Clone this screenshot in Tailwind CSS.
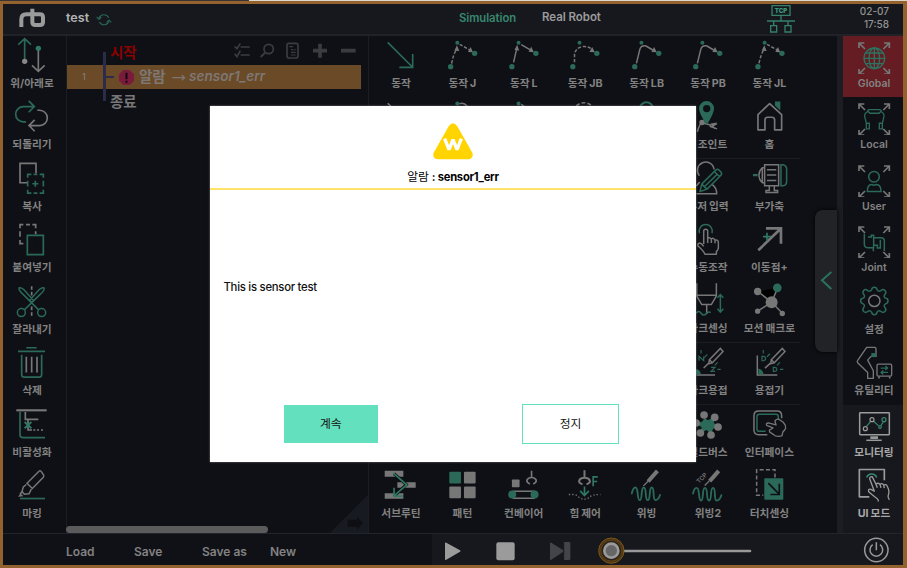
<!DOCTYPE html>
<html lang="ko">
<head>
<meta charset="utf-8">
<title>test</title>
<script src="https://cdn.jsdelivr.net/npm/@tailwindcss/browser@4"></script>
</head>
<body class="w-[907px] h-[568px] overflow-hidden bg-[#0f1015] font-['Inter','Noto_Sans_CJK_KR',sans-serif] text-[#828282]">
<svg class="absolute w-0 h-0" aria-hidden="true">
  <symbol id="corners" overflow="visible"><g fill="none" stroke="#777" stroke-width="5"><path d="M48 36V21H64M48 21L66 39M123 21H139V36M139 21L121 39M48 99V114H64M48 114L66 96M139 99V114H123M139 114L121 96"/></g></symbol>
</svg>
<div class="relative w-[907px] h-[568px] flex flex-col">
  <div class="h-px shrink-0 flex"><div class="w-[249px] bg-[#3a3434]"></div><div class="flex-1 bg-[#dcd6cb]"></div></div>
  <div class="flex-1 min-h-0 flex flex-col border-[3px] border-r-4 border-[#93622f]">

    <!-- header -->
    <header class="h-8 shrink-0 bg-[#17181d] border-b-2 border-[#202228] flex items-center font-semibold relative">
      <svg class="ml-[15px] w-[29px] h-[22px] shrink-0 mt-[-3px]" viewBox="54 21 87 66" fill="none" stroke="#9b9b9b" stroke-width="12"><path d="M64 81V58Q64 43 79 43H90M97 26V66Q97 75 106 75H120Q129 75 129 66V52Q129 43 120 43H88"/></svg>
      <div class="ml-[19px] text-[12.600px] text-[#b4b4b4] w-[26px] mt-[-1px]">test</div>
      <svg class="ml-[3px] w-[18px] h-[18px] mt-px" viewBox="285 27 54 54" fill="none" stroke="#276353" stroke-width="3.500"><path d="M297 48A16 16 0 0 1 326 47M327 58A16 16 0 0 1 298 60M290 45L297 52L304 45M320 61L327 54L334 61"/></svg>
      <div class="ml-[346px] w-[58px] text-[#388770] text-[11.300px] tracking-[-0.050px] whitespace-nowrap mt-[-2px]">Simulation</div>
      <div class="ml-[25px] w-[60px] text-[#9b9b9b] text-[11.500px] tracking-[-0.050px] whitespace-nowrap mt-[-2px]">Real Robot</div>
      <svg class="ml-[164px] w-[30px] h-[30px] shrink-0" viewBox="410 9 90 90"><g fill="none" stroke="#348069" stroke-width="4"><path d="M428 14H482V43H428ZM455 43V59M413 60H497M433 60V73M476 60V73M424 74H442V93H424ZM467 74H485V93H467Z"/></g><text x="455" y="35" text-anchor="middle" font-size="18" font-weight="900" fill="#3e9a7e">TCP</text></svg>
      <div class="ml-auto mr-[14px] text-right text-[10px] font-medium leading-[13.500px] text-[#929292] mt-[-2px]">02-07<br>17:58</div>
    </header>

    <div class="flex-1 min-h-0 flex">
      <!-- left tools -->
      <nav class="w-[64px] shrink-0 border-r border-[#1b1d22] text-[10.700px] font-bold text-center *:w-[58px] *:h-[61.450px]">
        <div><svg class="w-[58px] h-[38px]" viewBox="9 108 174 114" fill="none" stroke-width="5"><g stroke="#2b6a58"><path d="M74 184V118M55 134L74 116L93 134"/></g><g stroke="#777"><path d="M115 145V212M96 196L115 214L134 196"/></g><circle cx="74" cy="184" r="8" fill="#888"/><circle cx="115" cy="145" r="8" fill="#2f7864"/></svg><p class="leading-5">위/아래로</p></div>
        <div><svg class="w-[58px] h-[38px]" viewBox="9 292.350 174 114" fill="none" stroke-width="5"><path stroke="#2b6a58" d="M78 367H70A23 23 0 0 1 70 321H101M86 304L103 321L86 338"/><path stroke="#777" d="M112 332H119A23 23 0 0 1 119 378H88M104 361L87 378L104 395"/></svg><p class="leading-5">되돌리기</p></div>
        <div><svg class="w-[58px] h-[38px]" viewBox="9 26.700 174 114" fill="none" stroke-width="5"><path stroke="#777" d="M82 98H60V40H108V70"/><path stroke="#2b6a58" d="M83 83V73H94M101 73H112M119 73H130V83M130 92V109M130 119V129H119M112 129H101M94 129H83V119M83 109V92M97 101H115M106 92V110"/></svg><p class="leading-5">복사</p></div>
        <div><svg class="w-[58px] h-[38px]" viewBox="9 211.050 174 114" fill="none" stroke-width="5"><path stroke="#777" d="M60 236V225H70M78 225H90M97 225H107V236M107 245V254M60 245V261M60 271V282H70"/><path stroke="#2b6a58" d="M82 257H130V315H82Z"/></svg><p class="leading-5">붙여넣기</p></div>
        <div><svg class="w-[58px] h-[38px]" viewBox="9 395.400 174 114" fill="none" stroke-width="4.500"><path stroke="#777" stroke-width="5" d="M95 408V419M95 425V436M95 469V480M95 486V497"/><g stroke="#2b6a58"><path d="M73 479L119 434Q135 420 132 413Q125 410 113 423L89 450M116 479L71 434Q55 420 57 413Q64 410 76 423L100 450M89 450L95 457L100 450"/><circle cx="64" cy="487" r="12"/><circle cx="125" cy="487" r="12"/></g></svg><p class="leading-5">잘라내기</p></div>
        <div><svg class="w-[58px] h-[38px]" viewBox="9 24.750 174 114" fill="none" stroke-width="5"><path stroke="#2b6a58" d="M79 39H110M54 50H135M65 60V119Q65 127 73 127H117Q125 127 125 119V60"/><path stroke="#777" d="M79 66V113M95 66V113M111 66V113"/></svg><p class="leading-5">삭제</p></div>
        <div><svg class="w-[58px] h-[38px]" viewBox="9 209.100 174 114" fill="none" stroke-width="5"><path stroke="#2b6a58" d="M60 229V298Q60 307 69 307H135"/><path stroke="#777" stroke-width="6.500" d="M49 225H140"/><path stroke="#777" d="M76 230V252H115M84 254V284H96M100 284H106M111 284H117M123 284H129"/><path stroke="#2f7864" stroke-width="6" d="M74 260L94 279M94 260L74 279"/></svg><p class="leading-5">비활성화</p></div>
        <div><svg class="w-[58px] h-[38px]" viewBox="9 393.450 174 114" fill="none" stroke="#777" stroke-width="4.500"><path d="M81 445L117 409Q120 406 123 409L131 421Q132 424 130 427L97 461ZM79 449L70 456L66 470L73 478L87 477L94 463M66 470L60 479"/><path fill="#777" stroke="none" d="M54 486L62 476L70 484Z"/><path stroke="#2b6a58" stroke-width="5" d="M60 491H135"/></svg><p class="leading-5">마킹</p></div>
      </nav>

      <!-- program tree -->
      <section class="w-[302px] shrink-0 relative border-r border-[#1b1d22]">
        <div class="h-[29px] flex items-center">
          <span class="ml-[43px] w-[30px] text-[14.500px] leading-none text-[#8c0000] font-bold whitespace-nowrap mt-[5px]">시작</span>
          <svg class="ml-[92px] w-[130px] h-[22px]" viewBox="696 120 390 66" fill="none" stroke="#3b3c3f" stroke-width="5"><path d="M704 139L711 146L721 130M722 141H749M704 161L711 170L721 152M722 165H749" stroke-width="5"/><circle cx="806" cy="147" r="14"/><path stroke-width="6" d="M796 157L782 171"/><rect x="861" y="130" width="33" height="44" rx="6"/><path stroke-width="3.500" d="M868 140H879M883 149H887M873 149H880M873 157H887M873 165H887"/><path stroke-width="11" d="M939 152H981M960 131V173M1023 152H1067"/></svg>
        </div>
        <div class="h-6 w-[294px] bg-[#6b4a28] flex items-center whitespace-nowrap">
          <span class="w-[34px] text-center text-[9.500px]">1</span>
          <svg class="ml-[17px] w-[17px] h-[17px]" viewBox="0 0 51 51"><path fill="#7a1b3c" d="M16 3H35L48 16V35L35 48H16L3 35V16Z"/><path stroke="#100810" stroke-width="6" d="M25.500 11V31M25.500 35V41"/></svg>
          <span class="ml-[4px] w-[28px] text-[14.500px] leading-none font-bold text-[#7d7873] mt-px">알람</span>
          <svg class="ml-[5px] w-[14px] h-3" viewBox="0 0 42 36" fill="none" stroke="#7d7774" stroke-width="3.500"><path d="M1 20H38M29 12L38 20L29 28"/></svg>
          <span class="ml-[3px] text-[13.600px] leading-none font-semibold italic text-[#7d7873]">sensor1_err</span>
        </div>
        <div class="h-6 flex items-center"><span class="ml-[43px] text-[14.500px] leading-none font-bold text-[#777] mt-[2px]">종료</span></div>
        <div class="absolute left-[36px] top-[16px] w-[3px] h-[49px] bg-[#2a2c48]"></div>
        <div class="absolute left-[39px] top-[40px] w-[8px] h-[2px] bg-[#2a2c48]"></div>
        <div class="absolute left-[-1px] bottom-0 w-[202px] h-[7.500px] rounded-full bg-[#5b5b5b]"></div>
        <svg class="absolute right-0 bottom-0 w-[38px] h-[38px]" viewBox="424 76 114 114"><path fill="#181a21" d="M424 190L538 76V190Z"/><path fill="#0e0f13" d="M477 150H505V141L523 160L505 180V171H477Z"/></svg>
      </section>

      <!-- commands -->
      <section class="flex-1 min-w-0 relative pl-[1.300px] text-[10.700px] font-bold text-center [word-spacing:-0.500px]">
        <div class="grid grid-cols-7 w-[429.800px] h-[122.900px] grid-rows-2 border-b border-[#1b1d22] whitespace-nowrap">
          <div><svg class="w-full h-[38px]" viewBox=".9 108 184.200 114" fill="none" stroke="#2b6a58" stroke-width="5"><path d="M54 127L128 201M89 202H129V162"/></svg><p class="leading-5">동작</p></div>
          <div><svg class="w-full h-[38px]" viewBox="185.100 108 184.200 114" fill="none" stroke="#777" stroke-width="4.500"><path stroke-dasharray="10 5" d="M244 191Q249 163 258 150M268 133L299 150"/><path fill="#777" stroke="none" d="M252 152L260 136L267 153ZM293 156L301 141L308 157Z"/><g fill="#2b6a58" stroke="none"><circle cx="241" cy="200" r="8"/><circle cx="261" cy="128" r="6"/><circle cx="313" cy="160" r="8"/></g></svg><p class="leading-5">동작 J</p></div>
          <div><svg class="w-full h-[38px]" viewBox="369.300 108 184.200 114" fill="none" stroke="#777" stroke-width="4.500"><path d="M431 187L440 148M454 134L480 149"/><path fill="#777" stroke="none" d="M434 149L442 134L448 152ZM476 155L484 140L492 157Z"/><g fill="#2b6a58" stroke="none"><circle cx="426" cy="200" r="8"/><circle cx="446" cy="128" r="6"/><circle cx="498" cy="160" r="8"/></g></svg><p class="leading-5">동작 L</p></div>
          <div><svg class="w-full h-[38px]" viewBox="553.500 108 184.200 114" fill="none" stroke="#777" stroke-width="4.500"><path stroke-dasharray="10 5" d="M615 187Q615 175 615 163Q618 144 638 140Q654 138 665 146"/><path fill="#777" stroke="none" d="M660 156L668 141L676 157Z"/><g fill="#2b6a58" stroke="none"><circle cx="610" cy="200" r="8"/><circle cx="630" cy="128" r="6"/><circle cx="682" cy="160" r="8"/></g></svg><p class="leading-5">동작 JB</p></div>
          <div><svg class="w-full h-[38px]" viewBox="-42.300 108 184.200 114" fill="none" stroke="#777" stroke-width="4.500"><path d="M19 190L29 149Q33 135 48 138L68 150"/><path fill="#777" stroke="none" d="M64 156L72 141L80 157Z"/><g fill="#2b6a58" stroke="none"><circle cx="14" cy="200" r="8"/><circle cx="34" cy="128" r="6"/><circle cx="86" cy="160" r="8"/></g></svg><p class="leading-5">동작 LB</p></div>
          <div><svg class="w-full h-[38px]" viewBox="141.900 108 184.200 114" fill="none" stroke="#777" stroke-width="4.500"><path d="M203 190L213 149Q217 135 232 138L252 150"/><path fill="#777" stroke="none" d="M248 156L256 141L264 157Z"/><g fill="#2b6a58" stroke="none"><circle cx="198" cy="200" r="8"/><circle cx="218" cy="128" r="6"/><circle cx="270" cy="160" r="8"/></g></svg><p class="leading-5">동작 PB</p></div>
          <div><svg class="w-full h-[38px]" viewBox="326.100 108 184.200 114" fill="none" stroke="#777" stroke-width="4.500"><path stroke-dasharray="10 5" d="M386 190Q392 163 400 150M410 133L441 150"/><path fill="#777" stroke="none" d="M394 152L402 136L409 153ZM435 156L443 141L450 157Z"/><g fill="#2b6a58" stroke="none"><circle cx="383" cy="200" r="8"/><circle cx="403" cy="128" r="6"/><circle cx="455" cy="160" r="8"/></g></svg><p class="leading-5">동작 JL</p></div>
          <div><svg class="w-full h-[38px]" viewBox=".9 292.350 184.200 114" stroke="#777" stroke-width="5"><path d="M54 311L66 323"/></svg></div>
          <div><svg class="w-full h-[38px]" viewBox="185.100 292.350 184.200 114" fill="none" stroke="#777" stroke-width="4.500"><path d="M267 313Q280 307 291 320"/><circle cx="261" cy="312" r="6" fill="#2b6a58" stroke="none"/></svg></div>
          <div><svg class="w-full h-[38px]" viewBox="369.300 292.350 184.200 114" stroke="#777" stroke-width="4.500"><path d="M454 314L464 322"/><circle cx="446" cy="312" r="6" fill="#2b6a58" stroke="none"/></svg></div>
          <div><svg class="w-full h-[38px]" viewBox="553.500 292.350 184.200 114" fill="none" stroke="#777" stroke-width="4.500"><path stroke-dasharray="12 6" d="M620 319Q643 300 668 319"/></svg></div>
          <div><svg class="w-full h-[38px]" viewBox="-42.300 292.350 184.200 114" fill="none" stroke="#2b6a58" stroke-width="6"><circle cx="49" cy="328" r="20"/></svg></div>
          <div><svg class="w-full h-[38px]" viewBox="141.900 292.350 184.200 114" fill="none" stroke="#777" stroke-width="4.500"><path d="M203 397Q210 370 217 370M222 371L245 377M240 380L262 388M262 372L246 380"/><circle cx="217" cy="369" r="6" fill="#777"/><path fill="#777" stroke="none" d="M242 372L262 369L252 380L256 390Z"/><path fill="#2b6a58" fill-rule="evenodd" stroke="none" d="M231 376Q208 342 208 327A22 22 0 0 1 253 327Q253 342 231 376ZM231 316A11 11 0 1 0 231 338A11 11 0 1 0 231 316Z"/></svg><p class="leading-5 pl-[9px]">조인트</p></div>
          <div><svg class="w-full h-[38px]" viewBox="326.100 292.350 184.200 114" fill="none" stroke="#777" stroke-width="5"><path stroke-linejoin="round" d="M383 391V345L418 312L454 345V391H433V361Q433 353 425 353H412Q404 353 404 361V391Z"/><path fill="#2b6a58" stroke="none" d="M434 306H450V333L434 318Z"/></svg><p class="leading-5">홈</p></div>
        </div>
        <div class="grid grid-cols-7 w-[429.800px] h-[184.350px] grid-rows-3 border-b border-[#1b1d22] whitespace-nowrap">
          <div class="col-start-6"><svg class="w-full h-[38px]" viewBox="-38.100 26.700 184.200 114" fill="none" stroke="#777" stroke-width="4.500"><path d="M73 58A25 25 0 1 0 29 77M20 108L30 96M20 131H81Q81 113 67 103"/><path fill="#0f1015" stroke="#2b6a58" stroke-linejoin="round" d="M31 124L36 102L78 60Q83 55 88 60L94 66Q98 71 93 76L52 117ZM74 64L90 80M36 102L52 117M44 110L83 72"/></svg><p class="leading-5">유저 입력</p></div>
          <div><svg class="w-full h-[38px]" viewBox="146.100 26.700 184.200 114" fill="none" stroke="#777" stroke-width="4.500"><path d="M223 44H265V107H223ZM223 53H216Q206 62 206 75Q206 89 216 98H223M216 53V98M230 59H258M230 75H258M230 91H258M237 107V121H227V127H262V121H252V107"/><path stroke="#2b6a58" d="M272 44H278Q289 47 289 57V94Q289 105 278 107H272Z"/><path stroke="#2b6a58" stroke-width="7" d="M188 75H202"/></svg><p class="leading-5">부가축</p></div>
          <div class="col-start-6"><svg class="w-full h-[38px]" viewBox="-38.100 211.050 184.200 114" fill="none" stroke="#777" stroke-width="4.500" stroke-linejoin="round"><path d="M42 283V245Q42 239 48 239Q54 239 54 245V267Q58 261 65 268Q71 263 76 271Q87 269 86 281V296Q84 302 80 306V314H46Q43 305 25 289Q23 281 30 280Q36 281 42 290M54 265V280M65 268V280M76 271V281"/><path stroke="#2b6a58" d="M29 251A20 20 0 1 1 67 251"/></svg><p class="leading-5">수동조작</p></div>
          <div><svg class="w-full h-[38px]" viewBox="146.100 211.050 184.200 114" fill="none" stroke="#777" stroke-width="8"><path d="M204 302L270 238M227 236H272V282"/><path stroke="#2f7864" stroke-width="5" d="M218 261H242M230 249V273"/></svg><p class="leading-5">이동점+</p></div>
          <div class="col-start-6"><svg class="w-full h-[38px]" viewBox="-38.100 395.400 184.200 114" fill="none" stroke="#777" stroke-width="4.500"><path d="M21 402V438H80V402M21 440L36 466H65L80 440M51 466V494" /><path stroke="#2b6a58" d="M92 438V487M83 446L92 436L101 446M83 479L92 489L101 479M20 492Q27 482 34 492T49 494T63 490"/></svg><p class="leading-5">아크센싱</p></div>
          <div><svg class="w-full h-[38px]" viewBox="146.100 395.400 184.200 114" stroke="#777" stroke-width="4.500"><path d="M203 427L244 459L262 416M244 459L202 486M244 459L277 493"/><g fill="#777" stroke="none"><circle cx="202" cy="427" r="11"/><circle cx="244" cy="459" r="18"/><circle cx="202" cy="486" r="8"/><circle cx="276" cy="493" r="8"/></g><circle cx="261" cy="416" r="13" fill="#2b6a58" stroke="none"/></svg><p class="leading-5">모션 매크로</p></div>
        </div>
        <div class="grid grid-cols-7 w-[429.800px] h-[61.450px] border-b border-[#1b1d22] whitespace-nowrap">
          <div class="col-start-6"><svg class="w-full h-[38px]" viewBox="-38.100 24.750 184.200 114" fill="none" stroke="#777" stroke-width="4.500"><path d="M20 121H76M42 100L58 84M59 75L92 41L100 50L68 84ZM59 75L57 87L68 84"/><path fill="#2b6a58" stroke="none" d="M18 119V103Q31 104 34 119Z"/><g stroke="#2b6a58" stroke-width="3.500"><path d="M34 46V56M83 104H93M28 78V65L42 78V65M64 98H76L64 110H76M44 68L53 59M75 92L84 83"/></g></svg><p class="leading-5">아크용접</p></div>
          <div><svg class="w-full h-[38px]" viewBox="146.100 24.750 184.200 114" fill="none" stroke="#777" stroke-width="4.500"><path d="M201 62V121H261M224 100L243 83M243 75L276 41L284 50L252 84ZM243 75L241 87L252 84"/><path fill="#2b6a58" stroke="none" d="M204 119V101Q218 104 220 119Z"/><g stroke="#2b6a58" stroke-width="3.500"><path d="M219 46V56M269 104H279M215 65V78H219Q226 77 226 71.500T219 65ZM249 98V110H253Q260 109 260 104T253 98ZM230 66L239 57M260 92L269 83"/></g></svg><p class="leading-5">용접기</p></div>
        </div>
        <div class="grid grid-cols-7 w-[429.800px] h-[122.900px] grid-rows-2 whitespace-nowrap">
          <div class="col-start-6"><svg class="w-full h-[38px]" viewBox="-38.100 209.100 184.200 114" fill="#777"><path fill="#2b6a58" d="M45 248L55 255L76 243L72 263L86 272L70 280L64 296L51 284L32 293L36 276L18 264L37 259Z"/><circle cx="43" cy="239" r="11.500"/><circle cx="75" cy="246" r="11.500"/><circle cx="85" cy="275" r="11.500"/><circle cx="64" cy="299" r="11.500"/><circle cx="32" cy="293" r="11.500"/><circle cx="19" cy="263" r="11.500"/></svg><p class="leading-5">필드버스</p></div>
          <div><svg class="w-full h-[38px]" viewBox="146.100 209.100 184.200 114" fill="none" stroke="#777" stroke-width="4.500" stroke-linejoin="round"><path d="M231 298H205Q191 298 191 284V241Q191 227 205 227H260Q274 227 274 241V249"/><path stroke="#2b6a58" d="M226 288H207Q200 288 200 281V244Q200 237 207 237H257Q264 237 264 244V256"/><path fill="#0f1015" stroke-width="4" d="M248 278L229 270Q226 263 234 263L257 269L254 257Q261 247 270 255L279 261Q287 270 286 279Q283 286 278 289L275 302Q257 306 250 298L238 290Q236 282 242 282Z"/></svg><p class="leading-5">인터페이스</p></div>
          <div class="col-start-1"><svg class="w-full h-[38px]" viewBox=".9 33.450 184.200 114"><g fill="#777"><path d="M45 48H101V66H45ZM83 82H138V99H83ZM45 115H101V132H45Z"/></g><path fill="none" stroke="#0f1015" stroke-width="9" d="M73 56L110 89L73 124"/><path fill="none" stroke="#2f7864" stroke-width="5" d="M71 55L111 90L72 124M73 99V124H99"/></svg><p class="leading-5">서브루틴</p></div>
          <div><svg class="w-full h-[38px]" viewBox="185.100 33.450 184.200 114" fill="#777"><rect x="237" y="51" width="35" height="35" rx="3" fill="#2b6a58"/><rect x="281" y="51" width="35" height="35" rx="3"/><rect x="237" y="95" width="35" height="35" rx="3"/><rect x="281" y="95" width="35" height="35" rx="3"/></svg><p class="leading-5">패턴</p></div>
          <div><svg class="w-full h-[38px]" viewBox="369.300 33.450 184.200 114" fill="none" stroke="#777" stroke-width="4.500"><rect x="426" y="74" width="23" height="23" rx="2" fill="#777" stroke="none"/><path stroke-width="5" d="M485 48V66M480 87Q470 84 471 76Q475 68 485 68T499 76Q500 84 490 87"/><path d="M428 109H495M428 130H495"/><g fill="#2b6a58" stroke="none"><circle cx="427" cy="119" r="12"/><circle cx="494" cy="119" r="12"/></g></svg><p class="leading-5">컨베이어</p></div>
          <div><svg class="w-full h-[38px]" viewBox="553.500 33.450 184.200 114" fill="none" stroke="#777" stroke-width="6"><path d="M645 46V68M639 88Q627 85 629 77Q633 69 645 69T661 77Q663 85 651 88"/><path stroke-dasharray="4 6" d="M598 119H614Q624 121 629 128Q645 138 659 128Q667 119 693 119" stroke-width="4"/><path stroke="#2f7864" stroke-width="5" d="M645 95V121M632 108L645 122L658 108M671 94V66H685M671 80H683"/></svg><p class="leading-5">힘 제어</p></div>
          <div><svg class="w-full h-[38px]" viewBox="737.700 33.450 184.200 114" fill="none" stroke="#777"><path stroke-width="12" d="M834 80L862 48"/><path stroke-width="4" d="M820 93L834 79"/><path stroke="#2b6a58" stroke-width="5.500" stroke-linecap="round" d="M785 116Q789 98 796 98C806 98 800 136 809 136S811 98 821 98S823 136 833 136S835 98 845 98S846 136 856 136Q865 136 870 120"/></svg><p class="leading-5">위빙</p></div>
          <div><svg class="w-full h-[38px]" viewBox="-38.100 393.450 184.200 114" fill="none" stroke="#777"><path stroke-width="12" d="M60 439L87 408"/><path stroke-width="4" d="M45 452L59 438"/><text transform="translate(28 447) rotate(-46)" fill="#777" stroke="none" font-size="18" font-weight="600">TCP</text><path stroke="#2b6a58" stroke-width="5.500" stroke-linecap="round" d="M10 476Q14 458 21 459C31 459 25 497 34 497S36 459 46 459S48 497 58 497S60 459 70 459S71 497 81 497Q90 497 95 481"/></svg><p class="leading-5">위빙2</p></div>
          <div><svg class="w-full h-[38px]" viewBox="146.100 393.450 184.200 114" fill="none" stroke="#777" stroke-width="4.500"><path stroke-dasharray="12 7" d="M254 428V405H199V481H219"/><rect x="222" y="430" width="57" height="65" rx="3" fill="#2b6a58" stroke="none"/><path stroke="#0f1015" stroke-width="5" d="M234 445L266 477M240 479H267V447"/></svg><p class="leading-5">터치센싱</p></div>
        </div>
        <div class="absolute right-0 top-[173.500px] w-[22px] h-[142.500px] rounded-l-[8px] bg-[#222327] shadow-[0_0_4px_#000] flex items-center"><svg class="ml-[4px] w-4 h-[21px]" viewBox="387 361 48 63" fill="none" stroke="#2a715e" stroke-width="6"><path d="M424 367L396 392L424 418"/></svg></div>
      </section>
      <div class="w-[6px] shrink-0 bg-[#1b1d22]"></div>

      <!-- view and settings -->
      <aside class="w-[60px] shrink-0 text-[10.700px] font-bold text-center *:h-[61.450px] flex flex-col whitespace-nowrap [word-spacing:-0.500px]">
        <div class="bg-[#651c22]"><svg class="w-[60px] h-[38px]" viewBox="639 108 180 114" fill="none" stroke="#2b7360" stroke-width="4"><use href="#corners" x="639" y="108"/><circle cx="733" cy="175" r="31"/><ellipse cx="733" cy="175" rx="16" ry="31"/><path d="M733 144V206M702 175H764M707 159H759M707 191H759"/></svg><p class="leading-5 text-[10.500px] font-semibold pl-[2px]">Global</p></div>
        <div><svg class="w-[60px] h-[38px]" viewBox="639 292.350 180 114" fill="none" stroke="#2b6a58" stroke-width="4"><use href="#corners" x="639" y="292.350"/><path d="M716 330H750L754 334L747 341H720L713 334ZM714 335Q703 341 704 350L706 359L709 371V388H718V371H711M752 335Q763 341 762 350L760 359L757 371V388H748V371H755M709 388V379"/></svg><p class="leading-5 text-[10.500px] font-semibold pl-[2px]">Local</p></div>
        <div><svg class="w-[60px] h-[38px]" viewBox="459 26.700 180 114" fill="none" stroke="#2b6a58" stroke-width="4.500"><use href="#corners" x="459" y="26.700"/><circle cx="552" cy="80" r="16"/><path d="M532 124Q532 103 545 103Q552 108 559 103Q573 103 573 124Z"/></svg><p class="leading-5 text-[10.500px] font-semibold pl-[2px]">User</p></div>
        <div><svg class="w-[60px] h-[38px]" viewBox="459 211.050 180 114" fill="none" stroke="#2b6a58" stroke-width="4.500"><use href="#corners" x="459" y="211.050"/><path d="M523 252V284Q523 294 533 294H550V305M534 262H544V257H551V294M551 264H573Q583 264 583 274V304M551 287H562V295H571V270"/></svg><p class="leading-5 text-[10.500px] font-semibold pl-[2px]">Joint</p></div>
        <div><svg class="w-[60px] h-[38px]" viewBox="459 395.400 180 114" fill="none" stroke="#2b6a58" stroke-width="4.500" stroke-linejoin="round"><path d="M545 418Q546 411 553 411T561 418Q566 426 573 421Q579 415 585 421Q590 427 585 432Q579 440 587 444Q594 444 594 452T587 461Q579 465 585 472Q590 478 585 484Q579 489 573 484Q566 479 561 486Q560 494 553 494T545 486Q540 479 533 484Q527 489 521 484Q516 478 521 472Q527 465 519 461Q512 460 512 452T519 444Q527 440 521 432Q516 427 521 421Q527 415 533 421Q540 426 545 418Z"/><circle cx="553" cy="452" r="17" stroke="#777"/></svg><p class="leading-5 pl-[2px]">설정</p></div>
        <div><svg class="w-[60px] h-[38px]" viewBox="459 24.750 180 114" fill="none" stroke="#777" stroke-width="4" stroke-linejoin="round"><path d="M530 38H555Q559 39 558 44V65H543L533 76L550 108V131H533V113L503 84Q500 80 503 77Z"/><path fill="#2b6a58" stroke="none" d="M544 55H557V67H544Z"/><rect x="561" y="88" width="44" height="36" rx="4"/><path d="M567 125V131M599 125V131" stroke-width="5"/><path stroke="#2b6a58" d="M572 100H592M586 94L593 100L586 106M594 113H574M580 107L573 113L580 119" stroke-width="4"/></svg><p class="leading-5 pl-[2px]">유틸리티</p></div>
        <div class="bg-[#17181d] text-[#a8a8a8]"><svg class="w-[60px] h-[38px]" viewBox="459 209.100 180 114" fill="none" stroke="#9b9b9b" stroke-width="4.500"><rect x="509" y="232" width="89" height="66" rx="2"/><path stroke-width="8" d="M541 307H564"/><path d="M529 315H575"/><g stroke-width="3.500"><path stroke="#388770" d="M529 274L542 258M550 257L565 271M573 270L580 260"/><circle cx="526" cy="280" r="6"/><circle cx="546" cy="253" r="6"/><circle cx="570" cy="275" r="4" stroke="#388770"/><circle cx="582" cy="253" r="6" stroke="#388770"/></g></svg><p class="leading-5 pl-[2px]">모니터링</p></div>
        <div class="bg-[#17181d] text-[#a8a8a8] grow"><svg class="w-[60px] h-[38px]" viewBox="459 393.450 180 114" fill="none" stroke="#9b9b9b" stroke-width="5" stroke-linejoin="round"><path d="M583 436V404H508V486H538"/><path stroke="#388770" d="M530 428A16 16 0 0 1 560 428"/><path stroke-width="4" fill="#17181d" d="M565 500Q566 493 553 485L536 471Q534 462 541 463L553 469L539 432Q539 424 547 426L558 448Q565 442 570 449Q576 443 581 451Q588 446 592 455Q600 471 595 480Q592 487 598 495M558 448L562 459M570 449L573 459M581 451L583 460"/></svg><p class="leading-5 pl-[2px]">UI 모드</p></div>
      </aside>
    </div>

    <!-- footer -->
    <footer class="h-[32px] shrink-0 bg-[#17181d] border-t border-[#22252e] flex items-center text-[12px] font-semibold relative">
      <div class="w-[429px] h-full bg-[#101116] flex items-center whitespace-nowrap pt-[5px]">
        <span class="ml-[63px] w-[68px]">Load</span><span class="w-[68px]">Save</span><span class="w-[68px]">Save as</span><span>New</span>
      </div>
      <svg class="w-[330px] h-[31px] shrink-0" viewBox="186 237 990 93"><path fill="#9b9b9b" d="M225 264Q225 261 229 263L270 286Q274 288 270 290L229 314Q225 316 225 312Z"/><rect x="379" y="262" width="55" height="54" rx="6" fill="#9b9b9b"/><path fill="#434448" d="M540 264Q540 261 544 263L580 286V264Q580 261 583 261H597Q601 261 601 265V311Q601 315 597 315H583Q580 315 580 312V290L544 314Q540 316 540 312Z"/><path stroke="#17181d" stroke-width="3" d="M581 262V315"/><path stroke="#999" stroke-width="8" stroke-linecap="round" d="M730 288H1140"/><circle cx="724" cy="287" r="38" fill="#4e3715" stroke="#7d5718" stroke-width="3"/><circle cx="724" cy="287" r="31" fill="#2a2119" stroke="#694a18" stroke-width="2"/><circle cx="724" cy="287" r="21" fill="#666" stroke="#9b9b9b" stroke-width="8"/></svg>
      <svg class="ml-auto mr-[13px] w-[28px] h-[28px]" viewBox="516 606 84 84" fill="none" stroke="#999" stroke-width="4.500"><circle cx="559" cy="648" r="35"/><path d="M559 625V649M548 632A19 19 0 1 0 570 632"/></svg>
    </footer>
  </div>

  <!-- alarm dialog -->
  <div class="absolute left-[210px] top-[106px] w-[486px] h-[356px] bg-white text-[#111] flex flex-col shadow-[0_0_2px_#777]">
    <div class="h-[84px] border-b-2 border-[#ffe26a] flex flex-col items-center pt-[17px] shrink-0">
      <svg class="w-10 h-[37px]" viewBox="670 69 120 111"><path fill="#ffd400" d="M718 77Q730 62 742 77L788 158Q793 175 777 178H683Q667 175 672 158Z"/><path d="M705 116L718 149L730 119L742 149L755 116" fill="none" stroke="#fff" stroke-width="10" stroke-linejoin="bevel"/></svg>
      <div class="mt-[9px] text-[11.200px] tracking-[-0.250px] leading-4 whitespace-nowrap text-black"><span class="font-normal text-[11.800px] tracking-normal">알람</span> <b>: sensor1_err</b></div>
    </div>
    <div class="flex-1 pl-[13.500px] pt-[89px] text-[11.300px] tracking-[-0.250px] leading-4 font-medium">This is sensor test</div>
    <div class="h-[58px] shrink-0 flex items-start text-[11.800px]">
      <button class="ml-[73.500px] mt-px w-[94.500px] h-[38px] bg-[#63e1be] pt-[2px]">계속</button>
      <button class="ml-[144px] w-[97px] h-[40px] border border-[#63e1be] pt-[2px]">정지</button>
    </div>
  </div>
</div>
</body>
</html>
